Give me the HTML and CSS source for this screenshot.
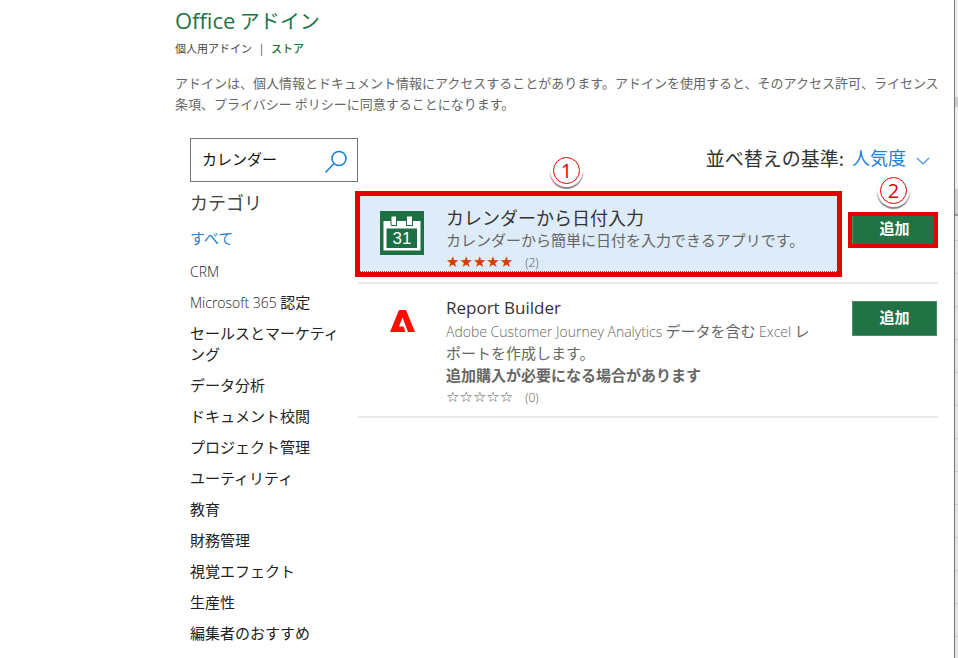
FILE: index.html
```html
<!DOCTYPE html>
<html lang="ja">
  <head>
    <meta charset="UTF-8" />
    <meta name="viewport" content="width=device-width, initial-scale=1.0" />
    <title>Office アドイン</title>
    <link rel="stylesheet" href="styles.css">
  </head>
  <body>
    <div class="window">
      <main class="store">
        <header class="store-header">
          <h1><span class="latin">Office</span> アドイン</h1>
          <nav class="tabs">
            <a href="#my">個人用アドイン</a>
            <span class="divider">|</span>
            <a href="#store" class="active">ストア</a>
          </nav>
          <p class="notice">アドインは、個人情報とドキュメント情報にアクセスすることがあります。アドインを使用すると、そのアクセス許可、ライセンス条項、プライバシー ポリシーに同意することになります。</p>
        </header>

        <div class="content">
          <aside class="sidebar">
            <form class="search">
              <input type="text" value="カレンダー" aria-label="検索" />
              <button type="button" aria-label="検索">
                <svg width="24" height="24" viewBox="0 0 24 24" fill="none" stroke="#1a7fd6" stroke-width="1.6">
                  <circle cx="15" cy="8.5" r="7" />
                  <path d="M10 13.5L1.5 22.5" />
                </svg>
              </button>
            </form>
            <h2>カテゴリ</h2>
            <ul class="categories">
              <li class="selected"><a href="#all">すべて</a></li>
              <li><a href="#crm"><span class="light">CRM</span></a></li>
              <li><a href="#m365"><span class="light">Microsoft 365</span> 認定</a></li>
              <li><a href="#sales">セールスとマーケティング</a></li>
              <li><a href="#data">データ分析</a></li>
              <li><a href="#review">ドキュメント校閲</a></li>
              <li><a href="#project">プロジェクト管理</a></li>
              <li><a href="#utility">ユーティリティ</a></li>
              <li><a href="#education">教育</a></li>
              <li><a href="#finance">財務管理</a></li>
              <li><a href="#visual">視覚エフェクト</a></li>
              <li><a href="#productivity">生産性</a></li>
              <li><a href="#picks">編集者のおすすめ</a></li>
            </ul>
          </aside>

          <section class="results">
            <div class="sort">
              <span>並べ替えの基準:</span>
              <button type="button">
                人気度
                <svg width="14" height="8" viewBox="0 0 14 8" fill="none" stroke="#3a95e0" stroke-width="1.2">
                  <path d="M1 1L7 7L13 1" />
                </svg>
              </button>
            </div>

            <article class="addin">
              <div class="card highlighted">
                <svg class="icon" width="44" height="44" viewBox="0 0 44 44">
                  <path fill="#1c7044" d="M0 0h44v44H0z" />
                  <path fill="#fff" d="M3.500 10h8V5.500h4.500v4.500h11V5.500h5v4.500h8.500v29.500h-37z" />
                  <path fill="#1c7044" d="M6.500 17.500h30.500v19.500H6.500zM10.500 10h1v4h-1zM16 10h1v4h-1zM11 14h6v1h-6zM26 10h1v4h-1zM32 10h1v4h-1zM26 14h7v1h-7z" />
                  <text x="22" y="33" text-anchor="middle" fill="#fff" font-family="Liberation Sans, sans-serif" font-size="17">31</text>
                </svg>
                <div class="info">
                  <h3>カレンダーから日付入力</h3>
                  <p>カレンダーから簡単に日付を入力できるアプリです。</p>
                  <div class="rating"><span class="stars full">★★★★★</span><span class="count">(2)</span></div>
                </div>
                <span class="badge badge-card">1</span>
              </div>
              <div class="action">
                <button type="button" class="add">追加</button>
                <span class="frame"></span>
                <span class="badge badge-add">2</span>
              </div>
            </article>

            <article class="addin">
              <div class="card">
                <svg class="icon" width="44" height="44" viewBox="0 0 44 44">
                  <path fill="#fa0f00" d="M10 32L19 10h7l9 22h-7L22.500 17.500L19 26.500h4.500l2 5.500z" />
                </svg>
                <div class="info">
                  <h3><span class="latin">Report Builder</span></h3>
                  <p><span class="light">Adobe Customer Journey Analytics</span> データを含む <span class="light">Excel</span> レポートを作成します。</p>
                  <p><strong>追加購入が必要になる場合があります</strong></p>
                  <div class="rating"><span class="stars">☆☆☆☆☆</span><span class="count">(0)</span></div>
                </div>
              </div>
              <div class="action">
                <button type="button" class="add">追加</button>
              </div>
            </article>
          </section>
        </div>
      </main>
      <div class="sheet-edge"></div>
    </div>
  </body>
</html>
```
FILE: styles.css
```css
* {
  box-sizing: border-box;
}

body {
  margin: 0;
  background-color: #fff;
  color: #222;
  font-family: "Noto Sans CJK JP", sans-serif;
  font-size: 15px;
  line-height: 21px;
}

h1, h2, h3, p, ul {
  margin: 0;
  padding: 0;
  font-weight: normal;
}

a {
  color: inherit;
  text-decoration: none;
}

button, input {
  font-family: inherit;
  font-size: inherit;
}

.window {
  display: flex;
  min-height: 100vh;
}

.store {
  flex: 1;
  padding: 6px 12px 0 175px;
}

.latin {
  font-family: "Open Sans", sans-serif;
}

.light {
  font-family: "Open Sans", sans-serif;
  font-size: 14px;
  font-weight: 300;
  line-height: 14px;
}

/* header */
.store-header h1 {
  color: #217346;
  font-size: 20px;
  line-height: 28px;
}

.store-header .latin {
  font-size: 22px;
}

.tabs {
  display: flex;
  gap: 8px;
  margin-top: 3px;
  font-size: 11px;
  color: #444;
}

.tabs .active {
  color: #217346;
  font-weight: 500;
}

.notice {
  margin-top: 13px;
  font-size: 13px;
  color: #666;
}

.content {
  display: flex;
  margin-top: 24px;
  padding: 0 4px 0 15px;
}

/* sidebar */
.sidebar {
  width: 168px;
  flex-shrink: 0;
}

.search {
  display: flex;
  height: 44px;
  border: 1px solid #777;
}

.search input {
  flex: 1;
  min-width: 0;
  padding: 0 0 4px 11px;
  border: none;
  outline: none;
  color: #111;
}

.search button {
  padding: 4px 9px 0 0;
  border: none;
  background: none;
  line-height: 0;
}

.sidebar h2 {
  margin-top: 8px;
  font-size: 18px;
  line-height: 24px;
  color: #444;
}

.categories {
  display: flex;
  flex-direction: column;
  gap: 10px;
  margin-top: 13px;
  padding-right: 16px;
  list-style: none;
}

.categories .selected {
  margin-bottom: 2px;
  color: #2a7fcc;
}

/* results */
.results {
  flex: 1;
  min-width: 0;
}

.sort {
  display: flex;
  justify-content: flex-end;
  align-items: center;
  gap: 8px;
  height: 38px;
  padding-right: 8px;
  font-size: 19px;
  color: #333;
}

.sort button {
  display: flex;
  align-items: center;
  gap: 10px;
  padding: 0;
  border: none;
  background: none;
  font-size: 18px;
  color: #1a7fd6;
}

.sort svg {
  margin-top: 8px;
}

.addin {
  display: flex;
  gap: 15px;
  margin-top: 1px;
  padding: 0 1px 10px 2px;
  border-bottom: 2px solid #e9e9e9;
}

.sort + .addin {
  margin-top: 20px;
}

.card {
  position: relative;
  display: flex;
  flex: 1;
}

.icon {
  flex-shrink: 0;
  margin: 15px 22px 0 20px;
}

.info {
  padding: 9px 16px 0 0;
}

.info h3 {
  font-size: 18px;
  line-height: 24px;
  color: #333;
}

.info h3 .latin {
  font-size: 17px;
}

.info p {
  line-height: 22px;
  color: #666;
}

.rating {
  display: flex;
  align-items: center;
  gap: 12px;
  padding-top: 3px;
  line-height: 17px;
}

.stars {
  font-family: "DejaVu Sans", sans-serif;
  color: #555;
}

.full {
  color: #d83b01;
}

.count {
  color: #555;
  font-family: "Open Sans", sans-serif;
  font-size: 12px;
  font-weight: 300;
}

.action {
  position: relative;
  align-self: flex-start;
  padding-top: 16px;
}

.add {
  display: block;
  width: 85px;
  height: 35px;
  padding: 0 0 4px;
  border: 1px solid #4a9068;
  background-color: #217346;
  color: #fff;
  font-weight: bold;
}

/* numbered steps */
.highlighted {
  border-bottom: 1px dotted #666;
  background-color: #deebf8;
  outline: 5px solid #e60000;
}

.frame {
  position: absolute;
  top: 16px;
  right: -1px;
  bottom: -1px;
  left: -4px;
  border: 4px solid #e60000;
}

.badge {
  position: absolute;
  width: 27px;
  height: 27px;
  border: 1px solid #e60000;
  border-radius: 50%;
  background-color: #fff;
  box-shadow: 0 0 0 3px #fff, 0 2px 1px 3px #888;
  color: #e60000;
  font-family: "Open Sans", sans-serif;
  font-size: 20px;
  line-height: 25px;
  text-align: center;
}

.badge-card {
  top: -39px;
  left: 193px;
}

.badge-add {
  top: -19px;
  left: 28px;
}

/* spreadsheet showing behind the dialog */
.sheet-edge {
  width: 4px;
  border-left: 1px solid #777;
  background:
    linear-gradient(#eee 0 97px, #ccc 97px 107px, #eee 107px 189px, #d0d0d0 189px 214px, #999 214px 216px, transparent 216px),
    repeating-linear-gradient(#e4e4e4 0 9px, #c8c8c8 9px 10px, #e4e4e4 10px 33px);
}
```
